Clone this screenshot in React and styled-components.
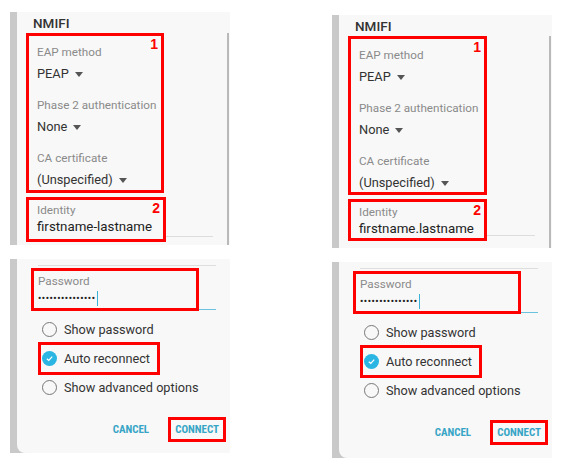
import React from 'react';
import styled, { createGlobalStyle } from 'styled-components';

const Global = createGlobalStyle`
  html, body { margin: 0; padding: 0; background: #ffffff; }
  body { font-family: Roboto, "Noto Sans", sans-serif; }
`;

const Page = styled.div`
  display: grid;
  grid-template-columns: 220px 220px;
  column-gap: 102px;
  padding-left: 10px;
  width: 568px;
  height: 469px;
  box-sizing: border-box;
`;

const Column = styled.div`
  display: flex;
  flex-direction: column;
  gap: 14px;
  padding-top: ${(p) => p.$top}px;
`;

const Card = styled.div`
  display: flex;
  height: ${(p) => p.$h}px;
  background: #c9c9c9;
  padding-left: 7px;
`;

const TopBody = styled.div`
  flex: 1;
  display: flex;
  background: #f8f8f8;
`;

const BottomBody = styled.div`
  flex: 1;
  display: flex;
  flex-direction: column;
  background: #f8f8f8;
  border-bottom-left-radius: 8px;
`;

const Content = styled.div`
  flex: 1;
  display: flex;
  flex-direction: column;
  padding-left: 9px;
`;

const Scrollbar = styled.div`
  width: 2px;
  margin: 21px 1px 0 0;
  background: #b9b9b9;
`;

const Title = styled.div`
  padding: 3px 0 0 7px;
  font-size: 13.5px;
  line-height: 16px;
  font-weight: 500;
  color: #333;
`;

const Highlight = styled.div`
  position: relative;
  box-sizing: border-box;
  width: ${(p) => p.$w}px;
  height: ${(p) => p.$h}px;
  margin-top: ${(p) => p.$mt || 0}px;
  border: 3px solid #ff0000;
  display: flex;
  flex-direction: column;
  padding: ${(p) => p.$pad};
`;

const Tag = styled.span`
  position: absolute;
  top: 0;
  right: 3px;
  color: #ff0000;
  font-family: "Liberation Sans", Arial, sans-serif;
  font-weight: bold;
  font-size: 14px;
  line-height: 16px;
`;

const Label = styled.div`
  font-size: 11.7px;
  line-height: 14px;
  color: #8a8a8a;
  margin-top: ${(p) => p.$mt || 0}px;
`;

const Value = styled.div`
  display: flex;
  align-items: center;
  gap: 6px;
  margin-top: 7px;
  font-size: 12.8px;
  line-height: 16px;
  color: #333;
`;

const Caret = styled.span`
  width: 0;
  height: 0;
  border-left: 4px solid transparent;
  border-right: 4px solid transparent;
  border-top: 5px solid #555;
`;

const FieldRow = styled.div`
  display: flex;
  align-items: flex-end;
  margin: ${(p) => p.$m};
`;

const Underline = styled.div`
  flex: 1;
  height: ${(p) => (p.$active ? 1.5 : 1)}px;
  background: ${(p) => (p.$active ? '#69c2de' : '#dddddd')};
  margin-bottom: ${(p) => p.$mb}px;
`;

const IdentityValue = styled.div`
  font-size: 13.3px;
  line-height: 17px;
  margin-top: 1px;
  color: #222;
`;

const Divider = styled.div`
  height: 1px;
  background: #dedede;
  margin: 6px 14px 0 21px;
`;

const PasswordLine = styled.div`
  display: flex;
  align-items: center;
  height: 17px;
  margin-top: 2px;
`;

const Dots = styled.span`
  font-size: 9px;
  font-weight: bold;
  letter-spacing: 0.6px;
  color: #222;
  line-height: 17px;
`;

const Cursor = styled.span`
  width: 1.5px;
  height: 15px;
  margin-left: 1px;
  background: #3bb3d9;
`;

const RadioList = styled.div`
  display: flex;
  flex-direction: column;
  align-items: flex-start;
  margin: 4px 0 0 23px;
`;

const RadioRow = styled.div`
  display: flex;
  align-items: center;
  gap: 7px;
  height: 29px;
  padding: 0 8px 0 2px;
  outline: ${(p) => (p.$hl ? '3px solid #ff0000' : 'none')};
  outline-offset: -1px;
  font-size: 12.7px;
  color: #333;
`;

const Radio = styled.span`
  box-sizing: border-box;
  width: 15px;
  height: 15px;
  border-radius: 50%;
  border: ${(p) => (p.$checked ? 'none' : '1.5px solid #777')};
  background: ${(p) => (p.$checked ? '#2bb5e3' : 'transparent')};
  display: flex;
  align-items: center;
  justify-content: center;
`;

const ButtonRow = styled.div`
  display: flex;
  justify-content: flex-end;
  gap: 12px;
  margin: 15px 4px 0 0;
`;

const Button = styled.button`
  box-sizing: border-box;
  height: 25px;
  padding: 0 4px;
  border: 3px solid ${(p) => (p.$hl ? '#ff0000' : 'transparent')};
  background: none;
  font-family: "Liberation Sans Narrow", "Roboto Condensed", Roboto, sans-serif;
  font-weight: bold;
  font-size: 11px;
  color: #36a5c6;
  display: flex;
  align-items: center;
`;

const Check = () => (
  <svg width="9" height="9" viewBox="0 0 10 10">
    <path d="M2 5.2 L4.2 7.2 L8 3" fill="none" stroke="#fff" strokeWidth="1.4" />
  </svg>
);

function TopCard({ identity, box1, box2 }) {
  return (
    <Card $h={233}>
      <TopBody>
        <Content>
          <Title>NMIFI</Title>
          <Highlight $w={box1.w} $h={box1.h} $mt={2} $pad="9px 0 0 8px">
            <Tag>1</Tag>
            <Label>EAP method</Label>
            <Value>PEAP <Caret /></Value>
            <Label $mt={16}>Phase 2 authentication</Label>
            <Value>None <Caret /></Value>
            <Label $mt={16}>CA certificate</Label>
            <Value>(Unspecified) <Caret /></Value>
          </Highlight>
          <FieldRow $m={`${box2.mt}px 14px 0 0`}>
            <Highlight $w={box2.w} $h={box2.h} $pad="3px 0 0 8px">
              <Tag>2</Tag>
              <Label>Identity</Label>
              <IdentityValue>{identity}</IdentityValue>
            </Highlight>
            <Underline $mb={5} />
          </FieldRow>
        </Content>
        <Scrollbar />
      </TopBody>
    </Card>
  );
}

function BottomCard({ h }) {
  return (
    <Card $h={h}>
      <BottomBody>
        <Divider />
        <FieldRow $m="2px 14px 0 14px">
          <Highlight $w={168} $h={43} $pad="3px 0 0 4px">
            <Label>Password</Label>
            <PasswordLine>
              <Dots>•••••••••••••••</Dots>
              <Cursor />
            </PasswordLine>
          </Highlight>
          <Underline $active $mb={1} />
        </FieldRow>
        <RadioList>
          <RadioRow>
            <Radio />
            Show password
          </RadioRow>
          <RadioRow $hl>
            <Radio $checked>
              <Check />
            </Radio>
            Auto reconnect
          </RadioRow>
          <RadioRow>
            <Radio />
            Show advanced options
          </RadioRow>
        </RadioList>
        <ButtonRow>
          <Button>CANCEL</Button>
          <Button $hl>CONNECT</Button>
        </ButtonRow>
      </BottomBody>
    </Card>
  );
}

export default function App() {
  return (
    <>
      <Global />
      <Page>
        <Column $top={12}>
          <TopCard
            identity="firstname-lastname"
            box1={{ w: 138, h: 160 }}
            box2={{ w: 140, h: 45, mt: 4 }}
          />
          <BottomCard h={194} />
        </Column>
        <Column $top={15}>
          <TopCard
            identity="firstname.lastname"
            box1={{ w: 139, h: 159 }}
            box2={{ w: 139, h: 42, mt: 4 }}
          />
          <BottomCard h={196} />
        </Column>
      </Page>
    </>
  );
}
